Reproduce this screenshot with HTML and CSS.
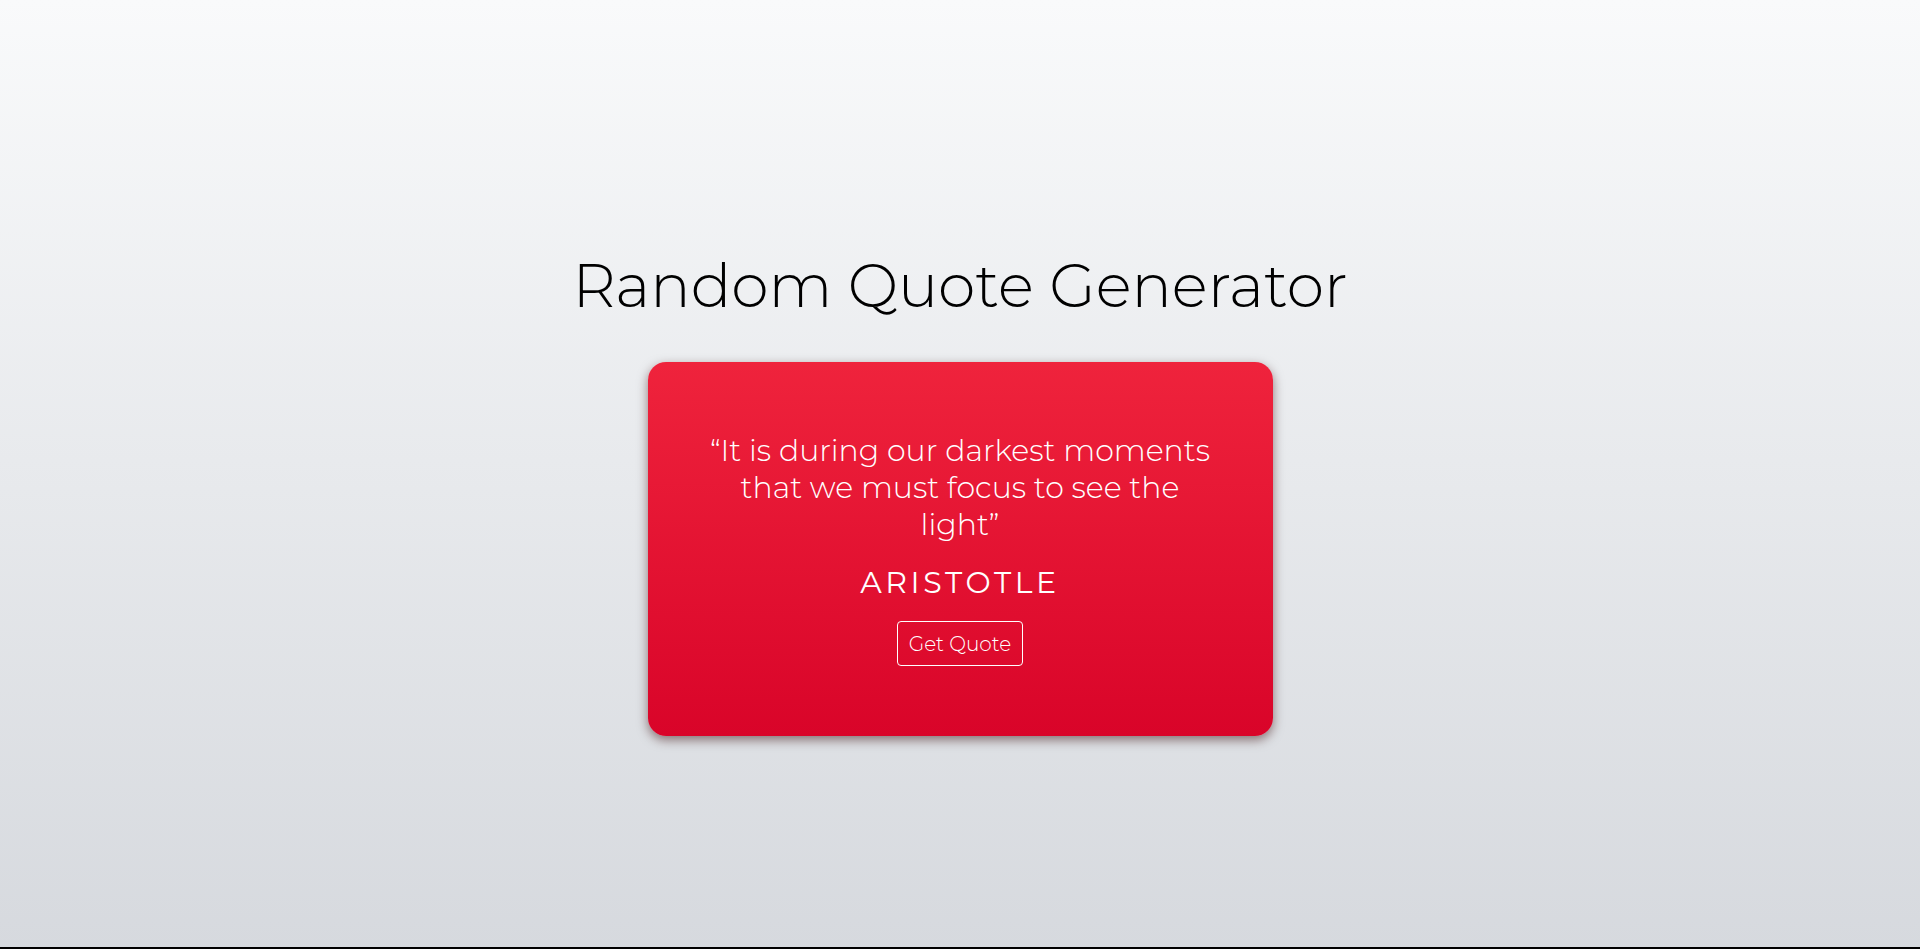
FILE: index.html
```html
<!DOCTYPE html>
<html lang="en">
<head>
<meta charset="utf-8">
<title>Random Quote Generator</title>
<link rel="stylesheet" href="styles.css">
</head>
<body>
<main class="page">
  <h1 class="title">Random Quote Generator</h1>
  <section class="card">
    <p class="quote">“It is during our darkest moments that we must focus to see the light”</p>
    <p class="author">ARISTOTLE</p>
    <button class="btn" type="button">Get Quote</button>
  </section>
</main>
<div class="bottom-line"></div>
</body>
</html>
```

FILE: styles.css
```css
* { box-sizing: border-box; }
html, body { margin: 0; padding: 0; }
body {
  min-height: 100vh;
  display: flex;
  flex-direction: column;
  font-family: Montserrat, Inter, "Open Sans", sans-serif;
  background: linear-gradient(to bottom, #f9fafb 0%, #d6d9de 100%);
  color: #000;
}
.page {
  flex: 1;
  display: flex;
  flex-direction: column;
  align-items: center;
  padding-top: 250px;
}
.title {
  margin: 0;
  font-size: 60px;
  line-height: 72px;
  font-weight: 300;
  color: #000;
}
.card {
  margin-top: 40px;
  width: 625px;
  height: 374px;
  border-radius: 18px;
  background: linear-gradient(to bottom, #ef233c 0%, #d90429 100%);
  box-shadow: 0 4px 11px rgba(50, 0, 0, 0.5);
  display: flex;
  flex-direction: column;
  align-items: center;
  justify-content: center;
  color: #fff;
}
.quote {
  margin: 0;
  width: 510px;
  text-align: center;
  font-size: 30px;
  line-height: 37px;
  font-weight: 300;
}
.author {
  margin: 22px 0 0;
  font-size: 30px;
  line-height: 36px;
  font-weight: 400;
  letter-spacing: 3.6px;
}
.btn {
  margin-top: 20px;
  height: 45px;
  padding: 0 11px;
  background: transparent;
  border: 1px solid #fff;
  border-radius: 4px;
  color: #fff;
  font-family: inherit;
  font-size: 20px;
  font-weight: 300;
  cursor: pointer;
}
.bottom-line {
  height: 2px;
  background: #000;
}
```
